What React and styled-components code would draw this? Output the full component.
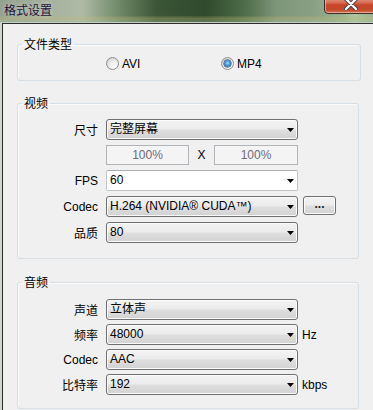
import React from "react";
import styled, { createGlobalStyle } from "styled-components";

const Global = createGlobalStyle`
  html, body { margin: 0; padding: 0; background: #f0f0f0; }
  body {
    width: 373px; height: 410px; overflow: hidden;
    font-family: "Liberation Sans", "Noto Sans CJK SC", sans-serif;
    font-size: 12px; color: #000;
  }
`;

const Window = styled.div`
  width: 373px;
  height: 410px;
  display: flex;
  flex-direction: column;
  overflow: hidden;
`;

const TitleBar = styled.div`
  height: 22px;
  flex: none;
  display: flex;
  align-items: flex-start;
  border-bottom: 1px solid #c3cdbf;
  background:
    linear-gradient(to bottom, rgba(255,255,255,0) 0%, rgba(255,255,255,0) 70%, rgba(196,184,112,0.35) 82%, rgba(170,196,160,0.35) 100%),
    linear-gradient(to right, #94a190 0%, #a3ae9c 10%, #aebaa6 22%, #6f8968 32%, #3b5636 42%, #2f4a2c 55%, #4b6a45 65%, #7d957a 74%, #8aa086 84%, #97b48f 92%, #a9c7a0 95%, #9ab394 100%);
`;

const Title = styled.div`
  padding: 2px 0 0 4px;
  font-family: "Noto Sans CJK SC", sans-serif;
  font-size: 12px;
  line-height: 16px;
  color: #24123a;
  text-shadow: 0 0 5px rgba(255, 255, 255, 0.55);
`;

const CloseButton = styled.div`
  margin-left: auto;
  margin-top: -6px;
  margin-right: -5px;
  width: 54px;
  height: 20px;
  flex: none;
  box-sizing: border-box;
  border: 1px solid #3b2a28;
  border-radius: 0 0 4px 4px;
  background: linear-gradient(to bottom, #e8b2a2 0%, #d9735a 40%, #c9452a 55%, #c24a2c 80%, #d0704e 100%);
  box-shadow: inset 0 0 0 1px rgba(255, 210, 190, 0.6);
  display: flex;
  align-items: center;
  justify-content: center;
`;

const Frame = styled.div`
  flex: 1;
  display: flex;
  border-left: 2px solid #cfd6cc;
`;

const Content = styled.div`
  flex: 1;
  background: #f0f0f0;
  border-left: 1px solid #2d2d2d;
  border-top: 1px solid #2d2d2d;
  padding: 13px 0 0 14px;
  display: flex;
  flex-direction: column;
`;

const Group = styled.fieldset`
  margin: ${(p) => p.$mt || 0}px 0 0 0;
  padding: 0;
  min-width: 0;
  width: ${(p) => p.$w}px;
  box-sizing: border-box;
  border: 1px solid #d5dfe5;
  border-radius: 3px;
  box-shadow: inset 1px 1px 0 #fbfbfb;
`;

const Legend = styled.legend`
  margin-left: 4px;
  padding: 0 2px;
  font-family: "Noto Sans CJK SC", sans-serif;
  font-size: 12px;
  line-height: 14px;
  color: #000;
`;

const RadioRow = styled.div`
  display: grid;
  grid-template-columns: 115px auto;
  height: 15px;
  align-items: center;
  padding: 5px 0 9px 88px;
`;

const RadioOption = styled.label`
  display: flex;
  align-items: center;
  font-size: 12px;
`;

const RadioCircle = styled.span`
  width: 13px;
  height: 13px;
  box-sizing: border-box;
  border-radius: 50%;
  border: 1px solid #8d8f90;
  background: radial-gradient(circle at 68% 72%, #ffffff 0%, #ececec 45%, #c6c6c6 100%);
  display: flex;
  align-items: center;
  justify-content: center;
  margin-right: 3px;
  &::after {
    content: "";
    display: ${(p) => (p.$checked ? "block" : "none")};
    width: 7px;
    height: 7px;
    border-radius: 50%;
    background: radial-gradient(circle at 50% 45%, #a8e0ff 0%, #4a9ede 40%, #124474 100%);
    box-shadow: 0 0 0 0.5px #173a5c;
  }
`;

const Rows = styled.div`
  display: flex;
  flex-direction: column;
  gap: ${(p) => p.$gap}px;
  padding: ${(p) => p.$pt}px 0 ${(p) => p.$pb}px 0;
`;

const Row = styled.div`
  display: flex;
  align-items: center;
  height: ${(p) => p.$h || 21}px;
`;

const Label = styled.div`
  width: 80px;
  flex: none;
  margin-right: 8px;
  text-align: right;
  white-space: nowrap;
  font-size: 12px;
`;

const Combo = styled.div`
  width: 192px;
  height: 21px;
  flex: none;
  box-sizing: border-box;
  display: flex;
  align-items: center;
  padding: 0 3px 0 3px;
  border: 1px solid ${(p) => (p.$editable ? "#c4c6cc" : "#707070")};
  border-top-color: ${(p) => (p.$editable ? "#abadb3" : "#707070")};
  border-radius: ${(p) => (p.$editable ? 2 : 3)}px;
  background: ${(p) =>
    p.$editable
      ? "#ffffff"
      : "linear-gradient(to bottom, #f3f3f3 0%, #ececec 45%, #dedede 55%, #d2d2d2 100%)"};
  box-shadow: ${(p) => (p.$editable ? "none" : "inset 0 0 0 1px #fbfbfb")};
`;

const ComboText = styled.span`
  flex: 1;
  white-space: nowrap;
  overflow: hidden;
  line-height: 15px;
`;

const Arrow = () => (
  <svg width="7" height="4" viewBox="0 0 7 4" style={{ flex: "none" }}>
    <polygon points="0,0 7,0 3.5,4" fill="#000" />
  </svg>
);

const PercentBox = styled.div`
  width: ${(p) => p.$w}px;
  height: 20px;
  flex: none;
  box-sizing: border-box;
  border: 1px solid #b1b4b8;
  background: #f4f4f4;
  color: #6f6a78;
  display: flex;
  align-items: center;
  justify-content: center;
  font-size: 12px;
`;

const Times = styled.span`
  width: 25px;
  flex: none;
  text-align: center;
  font-size: 12px;
`;

const DotsButton = styled.button`
  align-self: flex-start;
  margin-left: 5px;
  width: 33px;
  height: 19px;
  flex: none;
  padding: 0 0 3px 0;
  box-sizing: border-box;
  border: 1px solid #707070;
  border-radius: 3px;
  background: linear-gradient(to bottom, #f3f3f3 0%, #ececec 45%, #dedede 55%, #d2d2d2 100%);
  box-shadow: inset 0 0 0 1px #fbfbfb;
  font-family: "Liberation Sans", sans-serif;
  font-size: 12px;
  font-weight: bold;
  color: #1a1a2a;
  line-height: 12px;
`;

const Unit = styled.span`
  margin-left: 4px;
  font-size: 12px;
  white-space: nowrap;
`;

function Select({ value, editable }) {
  return (
    <Combo $editable={editable}>
      <ComboText>{value}</ComboText>
      <Arrow />
    </Combo>
  );
}

export default function App() {
  return (
    <>
      <Global />
      <Window>
        <TitleBar>
          <Title>格式设置</Title>
          <CloseButton>
            <svg width="14" height="12" viewBox="0 0 14 12">
              <path d="M2 1 L12 11 M12 1 L2 11" stroke="#3a3a4a" strokeWidth="4.2" strokeLinecap="round" />
              <path d="M2 1 L12 11 M12 1 L2 11" stroke="#ffffff" strokeWidth="2.4" strokeLinecap="round" />
            </svg>
          </CloseButton>
        </TitleBar>
        <Frame>
          <Content>
            <Group $w={344}>
              <Legend>文件类型</Legend>
              <RadioRow>
                <RadioOption>
                  <RadioCircle />
                  AVI
                </RadioOption>
                <RadioOption>
                  <RadioCircle $checked />
                  MP4
                </RadioOption>
              </RadioRow>
            </Group>

            <Group $w={342} $mt={15}>
              <Legend>视频</Legend>
              <Rows $gap={5} $pt={9} $pb={15}>
                <Row>
                  <Label>尺寸</Label>
                  <Select value="完整屏幕" />
                </Row>
                <Row $h={20}>
                  <Label />
                  <PercentBox $w={83}>100%</PercentBox>
                  <Times>X</Times>
                  <PercentBox $w={84}>100%</PercentBox>
                </Row>
                <Row>
                  <Label>FPS</Label>
                  <Select value="60" editable />
                </Row>
                <Row>
                  <Label>Codec</Label>
                  <Select value="H.264 (NVIDIA® CUDA™)" />
                  <DotsButton>...</DotsButton>
                </Row>
                <Row>
                  <Label>品质</Label>
                  <Select value="80" />
                </Row>
              </Rows>
            </Group>

            <Group $w={342} $mt={16}>
              <Legend>音频</Legend>
              <Rows $gap={4} $pt={10} $pb={13}>
                <Row>
                  <Label>声道</Label>
                  <Select value="立体声" />
                </Row>
                <Row>
                  <Label>频率</Label>
                  <Select value="48000" />
                  <Unit>Hz</Unit>
                </Row>
                <Row>
                  <Label>Codec</Label>
                  <Select value="AAC" />
                </Row>
                <Row>
                  <Label>比特率</Label>
                  <Select value="192" />
                  <Unit>kbps</Unit>
                </Row>
              </Rows>
            </Group>
          </Content>
        </Frame>
      </Window>
    </>
  );
}
